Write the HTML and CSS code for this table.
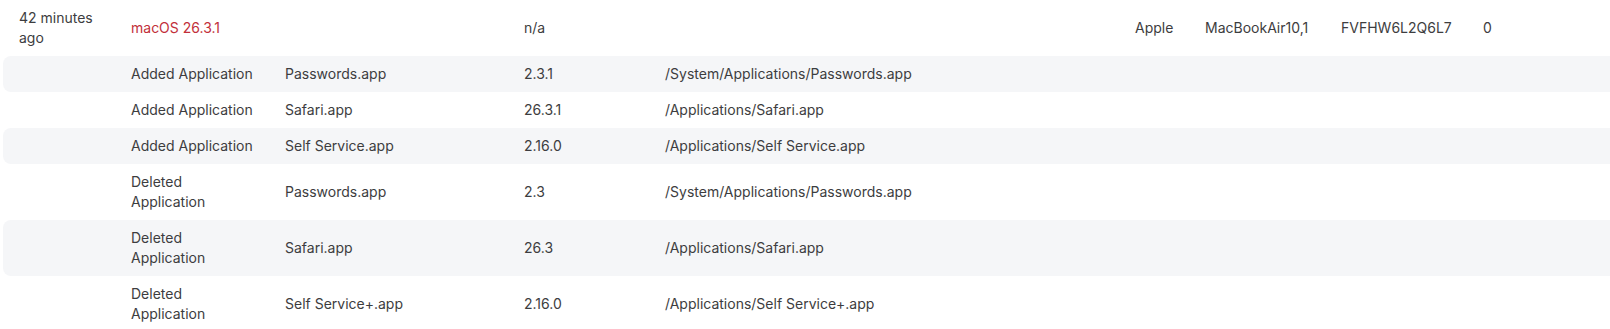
FILE: index.html
```html
<!DOCTYPE html>
<html lang="en">
<head>
    <meta charset="UTF-8">
    <title>Inventory history</title>
    <link rel="stylesheet" href="styles.css">
</head>
<body>
    <table class="history">
        <colgroup>
            <col class="c-time">
            <col class="c-event">
            <col class="c-name">
            <col class="c-version">
            <col class="c-path">
            <col class="c-make">
            <col class="c-model">
            <col class="c-serial">
            <col class="c-count">
        </colgroup>
        <tbody>
            <!-- main record -->
            <tr class="record">
                <td>42 minutes ago</td>
                <td class="os">macOS 26.3.1</td>
                <td></td>
                <td>n/a</td>
                <td></td>
                <td>Apple</td>
                <td>MacBookAir10,1</td>
                <td>FVFHW6L2Q6L7</td>
                <td>0</td>
            </tr>

            <!-- changes -->
            <tr class="change odd">
                <td></td>
                <td>Added Application</td>
                <td>Passwords.app</td>
                <td>2.3.1</td>
                <td>/System/Applications/Passwords.app</td>
                <td></td><td></td><td></td><td></td>
            </tr>
            <tr class="change">
                <td></td>
                <td>Added Application</td>
                <td>Safari.app</td>
                <td>26.3.1</td>
                <td>/Applications/Safari.app</td>
                <td></td><td></td><td></td><td></td>
            </tr>
            <tr class="change odd">
                <td></td>
                <td>Added Application</td>
                <td>Self Service.app</td>
                <td>2.16.0</td>
                <td>/Applications/Self Service.app</td>
                <td></td><td></td><td></td><td></td>
            </tr>
            <tr class="change">
                <td></td>
                <td>Deleted Application</td>
                <td>Passwords.app</td>
                <td>2.3</td>
                <td>/System/Applications/Passwords.app</td>
                <td></td><td></td><td></td><td></td>
            </tr>
            <tr class="change odd">
                <td></td>
                <td>Deleted Application</td>
                <td>Safari.app</td>
                <td>26.3</td>
                <td>/Applications/Safari.app</td>
                <td></td><td></td><td></td><td></td>
            </tr>
            <tr class="change">
                <td></td>
                <td>Deleted Application</td>
                <td>Self Service+.app</td>
                <td>2.16.0</td>
                <td>/Applications/Self Service+.app</td>
                <td></td><td></td><td></td><td></td>
            </tr>
        </tbody>
    </table>
</body>
</html>
```

FILE: styles.css
```css
/* general */
body {
    margin: 0;
    font-family: Inter, "Noto Sans", sans-serif;
    background: #fff;
    color: #3d3d40;
    overflow: hidden;
}

/* history table */
.history {
    margin-left: 3px;
    width: 1667px;
    table-layout: fixed;
    border-collapse: separate;
    border-spacing: 0;
    font-size: 14px;
    line-height: 20px;
}
.history td {
    padding: 8px 12px 8px 16px;
    vertical-align: middle;
    text-align: left;
}
.record td:first-child {
    vertical-align: top;
}

.c-time { width: 112px; }
.c-event { width: 154px; }
.c-name { width: 239px; }
.c-version { width: 141px; }
.c-path { width: 470px; }
.c-make { width: 70px; }
.c-model { width: 136px; }
.c-serial { width: 142px; }
.c-count { width: 203px; }

.os {
    color: #c22f3a;
}

/* zebra rows */
.change.odd td {
    background: #f5f6f8;
}
.change.odd td:first-child {
    border-top-left-radius: 8px;
    border-bottom-left-radius: 8px;
}
```
